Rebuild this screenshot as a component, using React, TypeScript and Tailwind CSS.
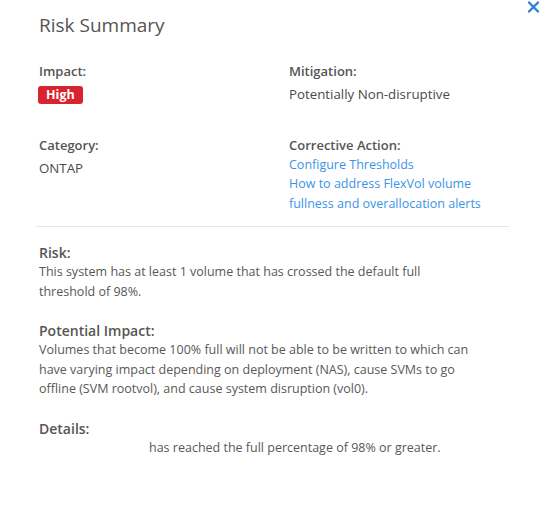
const font = { fontFamily: '"Open Sans", "Noto Sans", sans-serif' }

function Field({ label, children }: { label: string; children: React.ReactNode }) {
  return (
    <div className="flex flex-col">
      <span className="text-[13px] font-semibold leading-[20px] text-[#555]">{label}</span>
      <div className="mt-[4px] text-[13.3px] leading-[19.5px] text-[#4a4a4a]">{children}</div>
    </div>
  )
}

function Section({ label, children }: { label: string; children: React.ReactNode }) {
  return (
    <div className="flex flex-col">
      <span className="text-[14px] font-semibold leading-[18px] text-[#555]">{label}</span>
      <p className="text-[12.5px] leading-[19.5px] text-[#585858]">{children}</p>
    </div>
  )
}

export default function App() {
  return (
    <div className="relative w-[557px] h-[511px] bg-white" style={font}>
      {/* Close */}
      <button className="absolute top-0 left-[526px] text-[#2f80d1]">
        <svg width="15" height="14" viewBox="0 0 15 14" fill="none" stroke="currentColor" strokeWidth="2.4" strokeLinecap="round">
          <path d="M3 2.5l9 9M12 2.5l-9 9" />
        </svg>
      </button>

      <div className="pl-[39px] pr-[48px] pt-[12px]">
        <h1 className="text-[19px] leading-[26px] text-[#555]">Risk Summary</h1>

        <div className="grid grid-cols-[250px_1fr] gap-y-[30px] mt-[23px]">
          <Field label="Impact:">
            <span className="-ml-px inline-block rounded-[3px] bg-[#d9232e] px-[8px] text-[12.5px] font-bold leading-[18px] text-white">
              High
            </span>
          </Field>
          <Field label="Mitigation:">Potentially Non-disruptive</Field>
          <Field label="Category:">ONTAP</Field>
          <div className="flex flex-col">
            <span className="text-[13px] font-semibold leading-[20px] text-[#555]">Corrective Action:</span>
            <a className="text-[12.5px] leading-[19.5px] text-[#3a95e8]">Configure Thresholds</a>
            <a className="text-[12.5px] leading-[19.5px] text-[#3a95e8] w-[205px]">
              How to address FlexVol volume fullness and overallocation alerts
            </a>
          </div>
        </div>

        <div className="mt-[13px] -ml-[3px] h-px bg-[#e4e6eb]" />

        <div className="mt-[17px] flex flex-col gap-[21px]">
          <Section label="Risk:">
            This system has at least 1 volume that has crossed the default full
            <br />
            threshold of 98%.
          </Section>
          <Section label="Potential Impact:">
            Volumes that become 100% full will not be able to be written to which can
            <br />
            have varying impact depending on deployment (NAS), cause SVMs to go
            <br />
            offline (SVM rootvol), and cause system disruption (vol0).
          </Section>
          <Section label="Details:">
            <span className="inline-block w-[110px]" />
            has reached the full percentage of 98% or greater.
          </Section>
        </div>
      </div>
    </div>
  )
}
